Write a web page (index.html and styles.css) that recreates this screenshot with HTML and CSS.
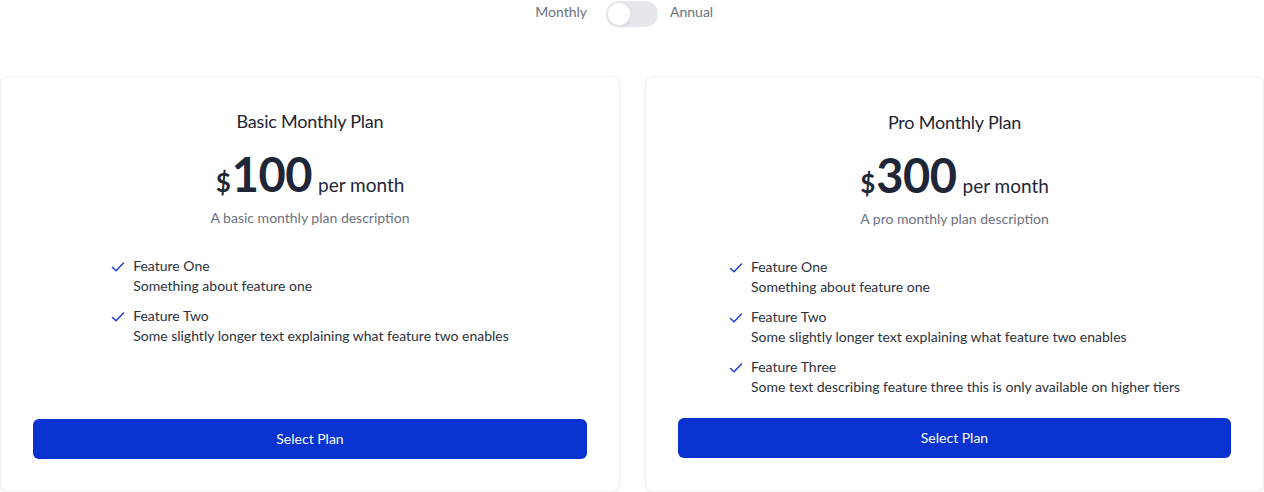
FILE: index.html
```html
<!DOCTYPE html>
<html lang="en">
<head>
<meta charset="utf-8">
<title>Pricing</title>
<link rel="stylesheet" href="styles.css">
</head>
<body>
<div class="page">
  <div class="billing">
    <span class="billing-label billing-left">Monthly</span>
    <span class="switch"><span class="knob"></span></span>
    <span class="billing-label billing-right">Annual</span>
  </div>
  <div class="plans">
    <div class="card">
      <h2 class="plan-name">Basic Monthly Plan</h2>
      <div class="price"><span class="currency">$</span><span class="amount">100</span><span class="period">per month</span></div>
      <p class="plan-desc">A basic monthly plan description</p>
      <ul class="features">
        <li class="feature">
          <svg class="check" viewBox="0 0 14 12" width="14" height="12"><path d="M1.5 6.5 L5 9.8 L12.5 2" fill="none" stroke="#1d3fd6" stroke-width="1.5" stroke-linecap="round" stroke-linejoin="round"/></svg>
          <div class="feature-text"><div class="feature-title">Feature One</div><div class="feature-desc">Something about feature one</div></div>
        </li>
        <li class="feature">
          <svg class="check" viewBox="0 0 14 12" width="14" height="12"><path d="M1.5 6.5 L5 9.8 L12.5 2" fill="none" stroke="#1d3fd6" stroke-width="1.5" stroke-linecap="round" stroke-linejoin="round"/></svg>
          <div class="feature-text"><div class="feature-title">Feature Two</div><div class="feature-desc">Some slightly longer text explaining what feature two enables</div></div>
        </li>
      </ul>
      <button class="select-btn">Select Plan</button>
    </div>
    <div class="card card-pro">
      <h2 class="plan-name">Pro Monthly Plan</h2>
      <div class="price"><span class="currency">$</span><span class="amount">300</span><span class="period">per month</span></div>
      <p class="plan-desc">A pro monthly plan description</p>
      <ul class="features">
        <li class="feature">
          <svg class="check" viewBox="0 0 14 12" width="14" height="12"><path d="M1.5 6.5 L5 9.8 L12.5 2" fill="none" stroke="#1d3fd6" stroke-width="1.5" stroke-linecap="round" stroke-linejoin="round"/></svg>
          <div class="feature-text"><div class="feature-title">Feature One</div><div class="feature-desc">Something about feature one</div></div>
        </li>
        <li class="feature">
          <svg class="check" viewBox="0 0 14 12" width="14" height="12"><path d="M1.5 6.5 L5 9.8 L12.5 2" fill="none" stroke="#1d3fd6" stroke-width="1.5" stroke-linecap="round" stroke-linejoin="round"/></svg>
          <div class="feature-text"><div class="feature-title">Feature Two</div><div class="feature-desc">Some slightly longer text explaining what feature two enables</div></div>
        </li>
        <li class="feature">
          <svg class="check" viewBox="0 0 14 12" width="14" height="12"><path d="M1.5 6.5 L5 9.8 L12.5 2" fill="none" stroke="#1d3fd6" stroke-width="1.5" stroke-linecap="round" stroke-linejoin="round"/></svg>
          <div class="feature-text"><div class="feature-title">Feature Three</div><div class="feature-desc">Some text describing feature three this is only available on higher tiers</div></div>
        </li>
      </ul>
      <button class="select-btn">Select Plan</button>
    </div>
  </div>
</div>
</body>
</html>
```

FILE: styles.css
```css
* { box-sizing: border-box; }
html, body { margin: 0; padding: 0; background: #ffffff; }
body {
  font-family: Lato, "Noto Sans", sans-serif;
  color: #1f2937;
}
.page {
  width: 1264px;
  height: 492px;
  overflow: hidden;
}
.billing {
  display: grid;
  grid-template-columns: 1fr auto 1fr;
  align-items: center;
  height: 28px;
}
.billing-label {
  font-size: 14px;
  line-height: 20px;
  padding-bottom: 4px;
  color: #6b7280;
}
.billing-left { justify-self: end; margin-right: 19px; }
.billing-right { justify-self: start; margin-left: 12px; }
.switch {
  position: relative;
  display: block;
  width: 52px;
  height: 26px;
  border-radius: 13px;
  background: #e5e7eb;
}
.knob {
  position: absolute;
  left: 1px;
  top: 1px;
  width: 24px;
  height: 24px;
  border-radius: 50%;
  background: #ffffff;
  border: 1px solid #e5e7eb;
  box-shadow: 0 1px 2px rgba(0,0,0,0.08);
}
.plans {
  display: grid;
  grid-template-columns: 620px 619px;
  column-gap: 25px;
  margin-top: 48px;
  height: 416px;
}
.card {
  display: flex;
  flex-direction: column;
  align-items: center;
  border: 1px solid #eff0f2;
  border-radius: 8px;
  background: #fff;
  box-shadow: 0 1px 3px rgba(0,0,0,0.07);
  padding: 30px 32px 32px;
}
.card-pro { padding-top: 31px; padding-bottom: 33px; }
.plan-name {
  margin: 0;
  font-size: 18px;
  font-weight: 400;
  line-height: 28px;
  color: #1e2433;
  letter-spacing: -0.2px;
}
.price {
  display: flex;
  align-items: baseline;
  margin-top: 16px;
  line-height: 1;
  color: #1e2638;
}
.currency {
  font-size: 26px;
  font-weight: 700;
  margin-right: 1px;
}
.amount {
  font-size: 47px;
  font-weight: 700;
  letter-spacing: -0.5px;
}
.period {
  font-size: 19px;
  margin-left: 6px;
  color: #1e2638;
}
.plan-desc {
  margin: 10px 0 0;
  font-size: 14px;
  line-height: 20px;
  color: #6b7280;
}
.features {
  list-style: none;
  margin: 28px 0 0;
  padding: 0;
  display: flex;
  flex-direction: column;
  gap: 10px;
}
.feature {
  display: flex;
  align-items: flex-start;
  gap: 8px;
}
.check { margin-top: 5px; flex: none; }
.feature-text {
  font-size: 14px;
  line-height: 20px;
  color: #2b3240;
}
.select-btn {
  margin-top: auto;
  width: 100%;
  height: 40px;
  padding: 0 0 2px;
  border: none;
  border-radius: 6px;
  background: #0833d1;
  color: #ffffff;
  font-family: Lato, "Noto Sans", sans-serif;
  font-size: 14px;
}
```
